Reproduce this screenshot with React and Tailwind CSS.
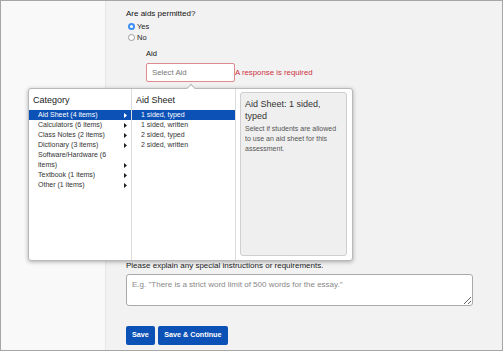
import React from 'react'

const categories = [
  { label: 'Aid Sheet (4 items)', active: true },
  { label: 'Calculators (6 items)' },
  { label: 'Class Notes (2 items)' },
  { label: 'Dictionary (3 items)' },
  { label: 'Software/Hardware (6 items)' },
  { label: 'Textbook (1 items)' },
  { label: 'Other (1 items)' },
]

const sheets = ['1 sided, typed', '1 sided, written', '2 sided, typed', '2 sided, written']

function Arrow({ active }) {
  return (
    <svg width="3" height="5" viewBox="0 0 3 5" className="shrink-0 mb-[2.5px]">
      <path d="M0 0 L3 2.5 L0 5 Z" fill={active ? '#ffffff' : '#222222'} />
    </svg>
  )
}

function Radio({ checked, label }) {
  return (
    <label className="flex items-center h-[11px] gap-[2px]">
      {checked ? (
        <span className="w-[7px] h-[7px] rounded-full bg-[#3d8ef2] flex items-center justify-center">
          <span className="w-[2.5px] h-[2.5px] rounded-full bg-white" />
        </span>
      ) : (
        <span className="w-[7px] h-[7px] rounded-full bg-white border border-[#9a9a9a]" />
      )}
      <span className="text-[7.5px] leading-[11px] text-[#222]">{label}</span>
    </label>
  )
}

function AidPopup() {
  return (
    <div className="absolute left-[-118px] top-[25px] w-[325px] h-[173px] bg-white border border-[#b9b9b9] rounded-[3px] shadow-[0_1px_4px_rgba(0,0,0,0.3)] z-10 flex">
      {/* caret */}
      <span className="absolute left-[159px] top-[-4px] w-[6px] h-[6px] bg-white border-l border-t border-[#b9b9b9] rotate-45" />

      <div className="w-[103px] shrink-0 border-r border-[#dcdcdc] pt-[5px]">
        <div className="pl-[4px] h-[12px] text-[9px] leading-[12px] text-[#222]">Category</div>
        <ul className="mt-[4px]">
          {categories.map((c) => (
            <li key={c.label}
              className={`flex items-end justify-between pl-[9px] pr-[4px] text-[7px] leading-[10px] ${c.active ? 'bg-[#0c51b6] text-white' : 'text-[#333]'}`}>
              <span className="max-w-[80px]">{c.label}</span>
              <Arrow active={c.active} />
            </li>
          ))}
        </ul>
      </div>

      <div className="w-[104px] shrink-0 border-r border-[#dcdcdc] pt-[5px]">
        <div className="pl-[4px] h-[12px] text-[9px] leading-[12px] text-[#222]">Aid Sheet</div>
        <ul className="mt-[4px]">
          {sheets.map((s, i) => (
            <li key={s}
              className={`pl-[9px] h-[10px] text-[7px] leading-[10px] ${i === 0 ? 'bg-[#0c51b6] text-white' : 'text-[#333]'}`}>
              {s}
            </li>
          ))}
        </ul>
      </div>

      <div className="flex-1 pl-[4px] pr-[5px] pt-[3px] pb-[4px]">
        <div className="h-full bg-[#efefef] border border-[#cfcfcf] rounded-[3px] px-[4px] pt-[6px]">
          <h3 className="text-[9px] leading-[11.5px] text-[#333]">Aid Sheet: 1 sided, typed</h3>
          <p className="mt-[1.5px] text-[7px] leading-[10px] text-[#555]">
            Select if students are allowed to use an aid sheet for this assessment.
          </p>
        </div>
      </div>
    </div>
  )
}

export default function App() {
  return (
    <div className="w-[503px] h-[351px] overflow-hidden border border-[#a6a6a6] flex font-['Liberation_Sans',Arial,sans-serif]">
      <aside className="w-[105px] shrink-0 bg-[#f9f9f9] border-r border-[#e7e7e7]" />

      <main className="flex-1 bg-[#f2f2f2] pl-[20px] pt-[8px]">
        <div className="h-[10px] text-[8px] leading-[10px] text-[#111]">Are aids permitted?</div>
        <div className="mt-[2px] pl-[2px]">
          <Radio checked label="Yes" />
          <Radio label="No" />
        </div>

        <div className="pl-[20px]">
          <div className="mt-[6px] h-[10px] text-[7.5px] leading-[10px] text-[#111]">Aid</div>
          <div className="mt-[4px] flex items-center">
            <div className="relative">
              <div className="w-[89px] h-[19px] bg-white border border-[#df8a90] rounded-[2px] pl-[5px] flex items-center text-[7.8px] text-[#777]">
                Select Aid
              </div>
              <AidPopup />
            </div>
            <span className="text-[7.8px] text-[#cc3142]">A response is required</span>
          </div>
        </div>

        <div className="mt-[179px] h-[10px] text-[8px] leading-[10px] text-[#222]">
          Please explain any special instructions or requirements.
        </div>
        <textarea
          placeholder={'E.g. "There is a strict word limit of 500 words for the essay."'}
          className="mt-[3px] block w-[347px] h-[32px] bg-white border border-[#aaaaaa] rounded-[3px] px-[5px] pt-[5px] text-[8px] leading-[10px] text-[#333] placeholder:text-[#888] resize-y outline-none"
        />

        <div className="mt-[20px] flex gap-[3px]">
          <button className="h-[19px] px-[6px] bg-[#0c51b6] rounded-[2px] text-white font-bold text-[7.2px]">Save</button>
          <button className="h-[19px] px-[6.5px] bg-[#0c51b6] rounded-[2px] text-white font-bold text-[7.2px]">Save &amp; Continue</button>
        </div>
      </main>
    </div>
  )
}
